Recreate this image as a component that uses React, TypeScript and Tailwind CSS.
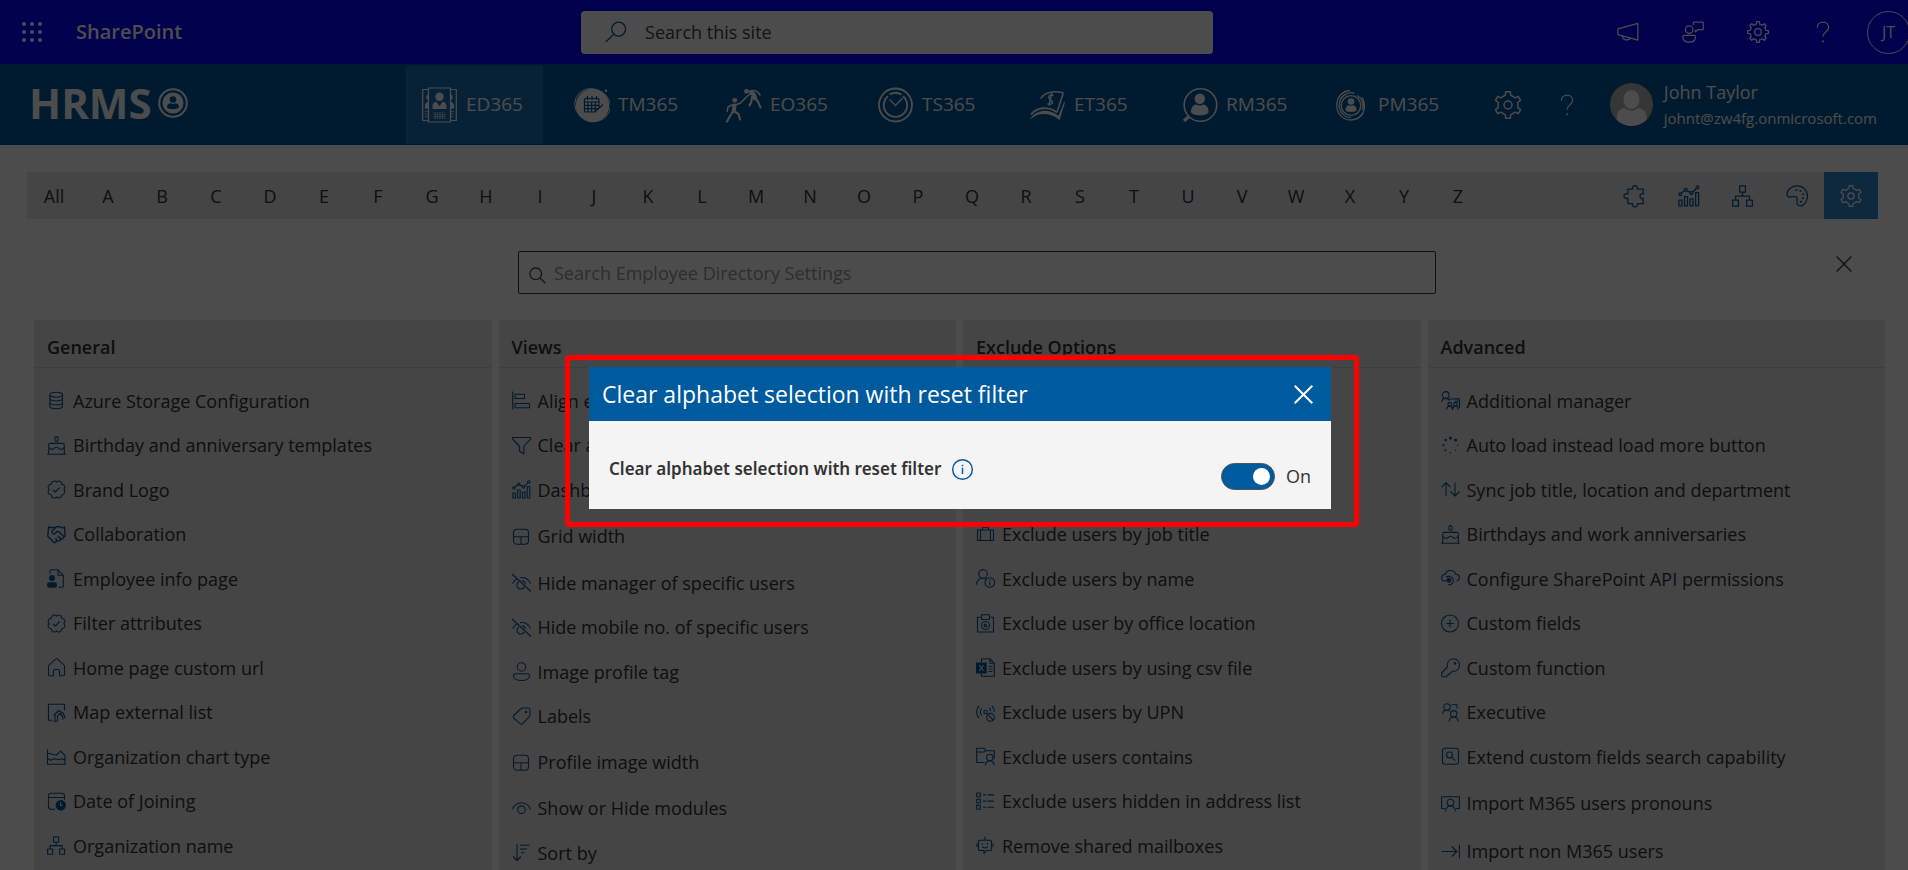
import React, { useState } from "react";
import { Handshake } from "lucide-react";

type Row = { icon: string; label: string; tall?: boolean };

function polar(cx: number, cy: number, r: number, a: number) {
  return `${(cx + r * Math.sin(a)).toFixed(2)} ${(cy - r * Math.cos(a)).toFixed(2)}`;
}

/* Closed gear outline with n teeth. */
function gearPath(c: number, n: number, outer: number, inner: number) {
  const step = (Math.PI * 2) / n;
  const pts: string[] = [];
  for (let i = 0; i < n; i++) {
    const a = i * step;
    pts.push(polar(c, c, outer, a - step * 0.17));
    pts.push(polar(c, c, outer, a + step * 0.17));
    pts.push(polar(c, c, inner, a + step * 0.25));
    pts.push(polar(c, c, inner, a + step * 0.75));
  }
  return `M${pts.join("L")}Z`;
}

/* Scalloped seal outline with n lobes. */
function sealPath(c: number, n: number, r: number) {
  const step = (Math.PI * 2) / n;
  let d = `M${polar(c, c, r, 0)}`;
  for (let i = 1; i <= n; i++) d += `A3 3 0 0 1 ${polar(c, c, r, i * step)}`;
  return d + "Z";
}

const seal = (
  <>
    <path d={sealPath(9.5, 8, 7.4)} />
    <path d="M6 9.800l2.300 2.200 4.600-4.600" />
  </>
);

const chart = (
  <>
    <path d="M.8 18v-5h2.600v5zM5.600 18v-8h2.600v8zM10.400 18v-6h2.600v6zM15.200 18V6.500h2.600V18z" />
    <path d="M2.600 7.400l3.200-2.600M7.600 4.800l3.200 1.800M12.600 6.200l3.400-3.400" />
    <circle cx="1.900" cy="8" r="1.200" />
    <circle cx="6.700" cy="4.200" r="1.200" />
    <circle cx="11.600" cy="7" r="1.200" />
    <circle cx="16.800" cy="2" r="1.200" />
  </>
);

const org = (
  <>
    <path d="M6.600.8h5v5.400h-5zM.6 13h5v5.200h-5zM12.600 13h5v5.200h-5z" />
    <path d="M9.100 6.200v3.400M3.100 13V9.600h12V13" />
  </>
);

const hiddenEye = (
  <>
    <path d="M0 1l19 17.500M.5 10.500c1-2.200 2.800-4 5-5M8 4.700c4.800-.9 9.200 1.600 10.500 5.800" />
    <path d="M7 8.700a3.900 3.900 0 1 0 5.400 5M9.800 7.800a3.900 3.900 0 0 1 3.600 3.400" />
  </>
);

const halves = (
  <>
    <rect x="1.500" y="2.200" width="15" height="15" rx="3.500" />
    <path d="M1.500 9.700h15M9 9.700v7.500" />
  </>
);

const cake = (
  <>
    <ellipse cx="9.500" cy="3" rx="1.600" ry="2.400" />
    <path d="M1.700 18V8.900c0-.9.600-1.500 1.500-1.500h12.600c.9 0 1.500.6 1.500 1.500V18M0 18.200h19" />
    <path d="M1.700 11.700c1.700 0 1.800 1.800 3.400 1.800s2.200-2.300 4.400-2.300 2.600 2.300 4.400 2.300 1.700-1.800 3.400-1.800" />
  </>
);

const glyphs: Record<string, React.ReactNode> = {
  database: (
    <>
      <ellipse cx="9.200" cy="3.800" rx="6.300" ry="2.500" />
      <path d="M2.900 3.800v11.400c0 1.300 2.800 2.500 6.300 2.500s6.300-1.200 6.300-2.500V3.800" />
      <path d="M2.900 7.600c0 1.300 2.800 2.400 6.300 2.400s6.300-1.100 6.300-2.400M2.900 11.400c0 1.300 2.800 2.400 6.300 2.400s6.300-1.100 6.300-2.400" />
    </>
  ),
  cake,
  seal,
  docPerson: (
    <>
      <path d="M3 4.500V2.200C3 1.300 3.400.8 4.200.8H11l5.300 5.500v10.600c0 .8-.5 1.300-1.300 1.300h-3.500M11 .8v5.500h5.300" />
      <circle cx="5" cy="9" r="3" fill="currentColor" stroke="none" />
      <rect x="0" y="13.200" width="10" height="5.600" rx="2.400" fill="currentColor" stroke="none" />
    </>
  ),
  home: (
    <path d="M1.500 8.300c0-.6.200-1 .7-1.400L8.500 1.200c.6-.5 1.400-.5 2 0l6.300 5.700c.5.400.7.800.7 1.400v8.200c0 .7-.5 1.200-1.200 1.200H12.500v-5c0-.7-.5-1.200-1.200-1.200H7.700c-.7 0-1.200.5-1.200 1.200v5H2.700c-.7 0-1.200-.5-1.200-1.200z" />
  ),
  mapList: (
    <>
      <path d="M5.500 17.300H1.500V1.200h16v6.300" />
      <path d="M6.500 18.300h4M8 18v-7l4-3.500 2 1.500 2 1 2.500 5.500M10.500 18v-5.300l2.200-2.200 3.300 3.300v3M6.500 12.500l4-4M14 10v3" />
    </>
  ),
  area: (
    <>
      <path d="M.5 2.200v15h18" />
      <path d="M.5 6.500h2.500l3 1 3.500.5L13.500 4.200l4.500 4.300v8.700" />
      <path d="M.5 11.300l3 2 4-1.500 4.500 1 2.500-1 3.500.8" />
    </>
  ),
  calendarClock: (
    <>
      <path d="M8 17.300H4a2.500 2.500 0 0 1-2.500-2.500V3.700A2.500 2.500 0 0 1 4 1.200h11a2.500 2.500 0 0 1 2.500 2.500v4M1.500 5.500h16" />
      <circle cx="13.800" cy="13.300" r="5.200" fill="currentColor" stroke="none" />
      <path d="M13.500 10.500v3h2.300" className="stroke-[#e6e6e6]" />
    </>
  ),
  org,
  align: <path d="M.7.500v18M3 3.300h9.500v4.200H3zM3 12.500h14.500v4.200H3z" />,
  funnel: <path d="M.7 1.500h17.800v1.700l-6.700 7.300V18l-4.200-2.700V10.500L.7 3.200z" />,
  chart,
  halves,
  hiddenEye,
  person: (
    <>
      <circle cx="9.500" cy="5" r="4.200" />
      <path d="M1.500 13.700c0-1.300.7-2 2-2h12c1.300 0 2 .7 2 2 0 3-3.500 4.800-8 4.800s-8-1.800-8-4.800z" />
    </>
  ),
  tag: (
    <>
      <path d="M10.800 1h5.400c1.100 0 1.800.7 1.800 1.800v5c0 .8-.2 1.300-.8 1.900l-6.400 7c-.9.900-1.900.9-2.800 0L1.700 11c-.8-.8-.8-1.700 0-2.500L8.500 2c.7-.7 1.300-1 2.300-1z" />
      <circle cx="14" cy="5" r=".8" fill="currentColor" />
    </>
  ),
  eye: (
    <>
      <path d="M.7 10.500C1.500 6.500 5.200 3.800 9.500 3.800s8 2.700 8.800 6.700" />
      <circle cx="9.500" cy="10.700" r="3.800" />
    </>
  ),
  sort: <path d="M5 1v16.500M1 13.500l4 4 4-4M8 2.200h9.500M8 6h7M9 9.800h3.500" />,
  briefcase: (
    <>
      <rect x="1.500" y="5" width="16" height="10.500" />
      <path d="M6.500 5V3.500c0-.8.400-1.200 1.200-1.200h3.600c.8 0 1.200.4 1.200 1.200V5M4.500 5v10.500M14.500 5v10.500" />
    </>
  ),
  personInfo: (
    <>
      <circle cx="7" cy="5" r="4.300" />
      <path d="M.5 15.700C.8 11.700 3.500 9.300 7 9.300c1 0 1.800.2 2.500.6" />
      <circle cx="13.800" cy="13.500" r="4.800" />
      <path d="M13.800 12.800v3.400M13.800 10.800v1" />
    </>
  ),
  office: (
    <>
      <path d="M4.500 3.200h-3v14.800h16V3.200h-3M5.500.8h8v4.700h-8z" />
      <circle cx="9.500" cy="11.500" r="4" />
      <path d="M9.500 10a1.500 1.500 0 1 0 1.500 1.500H9.500z" />
    </>
  ),
  excel: (
    <>
      <path d="M5.500 4.500V.8H14l4.300 4.500v12.900H5.500V15.500M14 .8v4.500h4.300M12.500 8.500h4M12.500 11h4M12.500 13.500h4" />
      <rect x="0" y="4.500" width="10.700" height="11" fill="currentColor" stroke="none" />
      <path d="M3.200 7.200l4.300 5.600M7.500 7.200l-4.300 5.600" className="stroke-[#e6e6e6]" />
    </>
  ),
  broadcast: (
    <>
      <path d="M3 3C-.2 6-.2 12 3 15M5.800 5c-1.800 2-1.800 6 0 8M13.200 5c.9.9 1.300 2 1.400 3M16 3c1.500 1.500 2.500 3.500 2.400 6" />
      <circle cx="9.500" cy="9" r="1.700" />
      <circle cx="14.500" cy="14.300" r="3.900" />
      <path d="M11.800 11.600l5.400 5.400" />
    </>
  ),
  folderPerson: (
    <>
      <path d="M8.500 15.500H.7V1.200h7L10 3.700h8.300v7.500M.7 5h7L10 3.700" />
      <circle cx="13.800" cy="10.500" r="3.200" />
      <path d="M9.300 18.500c.3-2.900 2-4.700 4.500-4.700s4.200 1.800 4.500 4.700" />
    </>
  ),
  list: (
    <>
      <path d="M.7 1h3.600v3.800H.7zM.7 7.200h3.600V11H.7zM.7 13.400h3.600v3.800H.7z" />
      <path d="M7 2.900h3M11.500 2.900H18M7 9.100h3M11.500 9.100H18M7 15.300h3M11.500 15.300H18" />
    </>
  ),
  bot: (
    <>
      <path d="M9 .5v3.700M3.500 4.200h11c.7 0 1 .3 1 1v8.300c0 .7-.3 1-1 1h-4L8 17.500v-3H3.500c-.7 0-1-.3-1-1V5.200c0-.7.300-1 1-1zM1 7.500v3.500M17 7.500v3.500" />
      <path d="M6.500 7v1.500M11.500 7v1.500M6 10.700c1.700 1.500 4.300 1.500 6 0" />
    </>
  ),
  manager: (
    <>
      <circle cx="4.700" cy="4" r="3.400" />
      <path d="M.5 11.200c.2-2.300 1.700-3.800 4.200-3.800 1.200 0 2.200.4 2.900 1.100M8 9.700V8h10.500v9M14 7.700h4.500M14 10.200h4" />
      <circle cx="8.700" cy="13.200" r="1.800" />
      <circle cx="14.500" cy="13.200" r="1.800" />
      <path d="M5.700 18.600c.2-2.300 1.200-3.500 3-3.500s2.800 1.200 2.900 3.500c.1-2.300 1.100-3.500 2.900-3.500s2.800 1.200 3 3.500" />
    </>
  ),
  dots: (
    <g fill="currentColor" stroke="none">
      <circle cx="9.500" cy="2" r="1.500" />
      <circle cx="14.600" cy="4" r="1.500" />
      <circle cx="4.600" cy="4" r="1.200" />
      <circle cx="2.400" cy="9.200" r="1.100" />
      <circle cx="16.800" cy="9.200" r=".6" />
      <circle cx="4.400" cy="14.300" r="1" />
      <circle cx="14.700" cy="14.300" r=".7" />
      <circle cx="9.500" cy="16.700" r=".8" />
    </g>
  ),
  sync: <path d="M5 16V2.700M.5 7.200L5 2.700l4.500 4.500M14 2.700V16M9.500 11.500L14 16l4.500-4.500" />,
  cloud: (
    <>
      <path d="M3.500 12.300C1.700 11.800.7 10.600.7 9c0-1.900 1.300-3.400 3.300-3.500C5 2.900 6.800 1.500 9.500 1.500S14 2.900 14.800 5.200c2.200.1 3.500 1.600 3.500 3.500 0 1.700-.9 2.800-2.600 3.300" />
      <path d="M5 8.200c2.500-1.500 5.500-.8 6.800 1.200 1 1.800.5 4.600-1.300 5.800-1 .6-2.300.8-3.500.3" />
      <circle cx="8" cy="11.300" r="1.900" fill="currentColor" />
      <path d="M3.500 11.800H7" />
    </>
  ),
  plus: (
    <>
      <circle cx="9" cy="9.500" r="8.500" />
      <path d="M9 5.800v7.400M5.300 9.500h7.400" />
    </>
  ),
  key: (
    <>
      <path d="M6.300 9C5.600 4.600 8.200.7 12.300.7c3.500 0 6.200 2.600 6.200 6.200 0 4.300-3.200 7-7.200 6.300L9.800 15.200H8v1.800H5.800v1.700H1.700c-.6 0-1-.4-1-1v-2.700z" />
      <circle cx="14" cy="5.300" r=".8" fill="currentColor" />
    </>
  ),
  executive: (
    <>
      <circle cx="6" cy="4" r="3.200" />
      <path d="M1.500 11C1.700 8.700 3.300 7.300 6 7.300c1 0 1.700.3 2.500.8M10.500 1.800h5.500v3.700" />
      <circle cx="12.700" cy="10.800" r="3.200" />
      <path d="M8.200 18.500c.2-2.900 1.800-4.500 4.500-4.500s4.300 1.600 4.500 4.500" />
    </>
  ),
  searchBox: (
    <>
      <rect x="1.500" y="1.200" width="16" height="16" rx="2.500" />
      <circle cx="8.500" cy="8" r="3" />
      <path d="M10.700 10.200l3.500 3.500" />
    </>
  ),
  board: (
    <>
      <path d="M4 14.500H.6V2.700h17.800v11.800H15" />
      <circle cx="9.500" cy="8.500" r="3.300" />
      <path d="M4.500 17.300c.3-3.400 2-5.300 5-5.300s4.700 1.900 5 5.300" />
    </>
  ),
  arrowIn: <path d="M.5 9.500h15M10.800 4.500l5 5-5 5M18.400 2.700v13.600" />,
  puzzle: (
    <path d="M4.700 3.500h2.700a2.200 2.200 0 1 1 4.200 0h5v4.200a2.100 2.100 0 1 0 0 3.900V16h-5a2.200 2.200 0 1 1-4.200 0H3.400v-4.400h-.7a2.100 2.100 0 1 1 0-4h.7V3.500z" />
  ),
  palette: (
    <>
      <path d="M4 10.300c-1.800.5-3.300-.8-3.200-2.600C1.200 3.600 5.200.8 9.800.8c5 0 8.700 3.800 8.700 8.700 0 4.700-2.800 8.500-6 8.500-2.200 0-3.300-1.500-3-3.500.3-1.700.4-2.800-.3-3.800-1-1.300-2.700-1.100-5.200-.4z" />
      <g fill="currentColor" stroke="none">
        <circle cx="9" cy="4.500" r=".9" />
        <circle cx="12.500" cy="5.200" r=".9" />
        <circle cx="14.800" cy="8" r=".9" />
        <circle cx="14.700" cy="11.500" r=".9" />
        <circle cx="12.800" cy="14.500" r=".9" />
      </g>
    </>
  ),
  gear: (
    <>
      <path d={gearPath(9.5, 6, 9.1, 6.9)} />
      <circle cx="9.500" cy="9.500" r="2.700" />
    </>
  ),
  gear8: (
    <>
      <path d={gearPath(9.5, 8, 9, 7)} />
      <circle cx="9.500" cy="9.500" r="2.900" />
    </>
  ),
  help: (
    <>
      <path d="M4.600 5.800C4.600 3 6.600 1 9.500 1s4.900 1.900 4.900 4.500c0 3.700-4.900 4-4.900 8.200" />
      <circle cx="9.500" cy="17.500" r=".8" fill="currentColor" stroke="none" />
    </>
  ),
  megaphone: (
    <>
      <path d="M1.500 6.500L18 2v14.500L1.500 12c-.5-.2-.8-.5-.8-1V7.500c0-.5.300-.8.800-1z" />
      <path d="M4.700 13c0 3.900 5.800 4.300 6.500 1.700" />
    </>
  ),
  feedback: (
    <>
      <circle cx="6.200" cy="7.500" r="3.200" />
      <path d="M.7 13.500c0-.7.400-1 1-1h9c.6 0 1 .3 1 1 0 3-2.300 4.700-5.500 4.700S.7 16.500.7 13.500z" />
      <path d="M9.800 3.500V1h8.500v6.500h-4.600l-2.200 1.800V7.500" />
    </>
  ),
  searchLeft: (
    <>
      <circle cx="11.800" cy="7" r="6" />
      <path d="M7.600 11.300L.7 18.200" />
    </>
  ),
  search: (
    <>
      <circle cx="7.500" cy="7.500" r="6.500" />
      <path d="M12.200 12.200l6 6" />
    </>
  ),
  close: <path d="M.7.7l17.600 17.600M18.300.7L.7 18.300" />,
  info: (
    <>
      <circle cx="9.500" cy="9.500" r="8.900" />
      <path d="M9.500 8v5.500M9.500 5.300v1.300" />
    </>
  ),
};

function Icon({ name, className = "size-[19px] stroke-[1.1]" }: { name: string; className?: string }) {
  if (name === "handshake") return <Handshake className="size-[21px] shrink-0" strokeWidth={1.5} aria-hidden />;
  return (
    <svg
      viewBox="0 0 19 19"
      className={`shrink-0 overflow-visible ${className}`}
      fill="none"
      stroke="currentColor"
      strokeLinejoin="round"
      aria-hidden
    >
      {glyphs[name]}
    </svg>
  );
}

const appGlyphs: Record<string, React.ReactNode> = {
  ED365: (
    <>
      <g fill="none" stroke="currentColor" strokeWidth="1.200">
        <path d="M6.500 1h22v34h-22zM6.500 2.500H.7v31h5.800M28.500 2.500h5.800v31h-5.800" />
      </g>
      <circle cx="17.500" cy="9.700" r="4.200" />
      <path d="M10.500 22v-3.500c0-2 1.500-3.500 4-3.800l3 4.500 3-4.500c2.500.3 4 1.800 4 3.800V22zM6 7.500C3.800 8 3.800 12 6 13zM6 15c-2.200.5-3 2-3 4v2.500h3zM29 7.500c2.200.5 2.200 4.500 0 5.500zM29 15c2.200.5 3 2 3 4v2.500h-3z" />
      <g fill="none" stroke="currentColor" strokeWidth="1.100" strokeDasharray="1.500 1">
        <path d="M12 26h11M12.500 27.700h11M12 29.400h11M12.500 31.100h11M3 24.500h3M3 27h3M3 29.500h3M29 24.500h3M29 27h3M29 29.500h3" />
      </g>
    </>
  ),
  TM365: (
    <>
      <circle cx="18.500" cy="18.500" r="16.700" />
      <g fill="none" stroke="currentColor" strokeWidth="1">
        <ellipse cx="16.500" cy="17" rx="15.800" ry="15.500" />
        <ellipse cx="20" cy="19" rx="16.500" ry="15.500" />
      </g>
      <circle cx="32" cy="3.800" r="1.200" />
      <g fill="none" className="stroke-[#005a9e]" strokeWidth="1.200">
        <path d="M25 21V12.500c0-.7-.4-1-1-1H11.500c-.6 0-1 .3-1 1V24c0 .7.400 1 1 1H21l8-7.500M13.500 9v4M18 9v4M22.500 9v4M10.500 15h14.500M10.500 18.300h14.500M10.500 21.600H24M14 15v10M17.600 15v10M21.200 15v10" />
      </g>
    </>
  ),
  EO365: (
    <>
      <circle cx="20.500" cy="4.300" r="2.400" />
      <circle cx="8.800" cy="13.300" r="2.400" />
      <g fill="none" stroke="currentColor" strokeLinecap="round" strokeLinejoin="round">
        <path d="M10.500 17.500l4-1.500 5.500-5.500 4-3.500" strokeWidth="1.600" />
        <path d="M23 4.500c4.500-2 8.500-.5 11 3.500" strokeWidth="1.600" />
        <path d="M25.500 5.500c2 1.500 3 3 3.500 5.500" strokeWidth="4.500" />
        <path d="M26 10c-.5 3.500 0 5-2.500 8.500M29.500 11c2 2.500 3.500 5.500 5 9.500" strokeWidth="2.200" />
        <path d="M8.500 18.500l-.8 5.500" strokeWidth="4" />
        <path d="M7 17.500l-5 2.500-.8 4.500" strokeWidth="1.500" />
        <path d="M7 24.500l-3 4.500-3 5.500M8.500 24.500l4 2.500 1.500 5.500" strokeWidth="2.200" />
      </g>
    </>
  ),
  TS365: (
    <g fill="none" stroke="currentColor">
      <circle cx="17.500" cy="18" r="16.500" strokeWidth="1.800" />
      <path d="M10 9.200a11.700 11.700 0 1 0 15 0" strokeWidth="1.800" />
      <path d="M11.500 7.500c3.800-2.200 8.200-2.200 12 0" strokeWidth="2" />
      <path d="M11.500 12.500l6 6 7-7.500" strokeWidth="1.400" />
    </g>
  ),
  ET365: (
    <>
      <path d="M0 32.500C4 24 17 19.500 28.500 28.800l5.800-14.300.7 1L29.500 33C20 25.500 9 25 0 32.500z" />
      <g fill="none" stroke="currentColor">
        <path d="M10.500 11.500C15 5.500 22 3.500 32 5.500c1 0 1.400.5 1 1.500L27 25" strokeWidth="1.500" />
        <path d="M1 27.500c6-7.500 17.500-8.500 26-2" strokeWidth="1.800" />
        <path d="M23.500 8.500c-3-1.500-5.200.3-4.600 2.500.5 1.800 3.700 2 3.500 4.300-.2 2-3.200 2.700-5 1.400M21.800 6l-3 12.500" strokeWidth="1.500" />
      </g>
    </>
  ),
  RM365: (
    <>
      <circle cx="18.500" cy="18" r="16.300" fill="none" stroke="currentColor" strokeWidth="1.600" />
      <path d="M6.500 30l-4.500 4" stroke="currentColor" strokeWidth="3.200" />
      <circle cx="17.800" cy="11.700" r="5.200" />
      <path d="M9 24.500c0-4.500 3-7 5.500-7 2 1.200 4.600 1.200 6.600 0 2.500 0 5.500 2.500 5.500 7 0 2.500-3.600 3.700-8.800 3.700S9 27 9 24.500z" />
    </>
  ),
  PM365: (
    <>
      <g fill="none" stroke="currentColor" strokeWidth="1.300">
        <circle cx="17" cy="18.500" r="9.800" />
        <path d="M16 3.500C8.500 4 2.700 10 2.700 18.300 2.700 27 9 33 17 33c5.500 0 10-2.800 12.500-7.500M20.500 6.300C13.500 4 5.200 9.500 5.200 18.300c0 7.200 5.600 12.200 11.800 12.200M17 33c8.500-1 13.500-6.500 13.500-14 0-3.500-1-6.500-2.700-8.800M28.300 23c1.800-5.500 0-11.500-5-14.500" />
      </g>
      <circle cx="17" cy="14.500" r="3.300" />
      <path d="M11.500 22.800c0-2.900 1.900-4.500 3.500-4.500 1.200.7 2.800.7 4 0 1.600 0 3.500 1.600 3.500 4.500 0 1.500-2.200 2.200-5.500 2.200s-5.500-.7-5.500-2.200z" />
    </>
  ),
};

const apps = ["ED365", "TM365", "EO365", "TS365", "ET365", "RM365", "PM365"];
const letters = ["All", ..."ABCDEFGHIJKLMNOPQRSTUVWXYZ".split("")];
const tools = [
  { icon: "puzzle", label: "Integrations" },
  { icon: "chart", label: "Dashboard" },
  { icon: "org", label: "Organization chart" },
  { icon: "palette", label: "Appearance" },
  { icon: "gear", label: "Settings" },
];

const columns: { title: string; rows: Row[] }[] = [
  {
    title: "General",
    rows: [
      { icon: "database", label: "Azure Storage Configuration" },
      { icon: "cake", label: "Birthday and anniversary templates" },
      { icon: "seal", label: "Brand Logo" },
      { icon: "handshake", label: "Collaboration" },
      { icon: "docPerson", label: "Employee info page" },
      { icon: "seal", label: "Filter attributes" },
      { icon: "home", label: "Home page custom url" },
      { icon: "mapList", label: "Map external list" },
      { icon: "area", label: "Organization chart type" },
      { icon: "calendarClock", label: "Date of Joining" },
      { icon: "org", label: "Organization name" },
    ],
  },
  {
    title: "Views",
    rows: [
      { icon: "align", label: "Align employee" },
      { icon: "funnel", label: "Clear alphabet" },
      { icon: "chart", label: "Dashboard" },
      { icon: "halves", label: "Grid width", tall: true },
      { icon: "hiddenEye", label: "Hide manager of specific users" },
      { icon: "hiddenEye", label: "Hide mobile no. of specific users" },
      { icon: "person", label: "Image profile tag" },
      { icon: "tag", label: "Labels" },
      { icon: "halves", label: "Profile image width", tall: true },
      { icon: "eye", label: "Show or Hide modules" },
      { icon: "sort", label: "Sort by" },
    ],
  },
  {
    title: "Exclude Options",
    rows: [
      { icon: "office", label: "Exclude departments" },
      { icon: "list", label: "Exclude domains" },
      { icon: "person", label: "Exclude guests" },
      { icon: "briefcase", label: "Exclude users by job title" },
      { icon: "personInfo", label: "Exclude users by name" },
      { icon: "office", label: "Exclude user by office location" },
      { icon: "excel", label: "Exclude users by using csv file" },
      { icon: "broadcast", label: "Exclude users by UPN" },
      { icon: "folderPerson", label: "Exclude users contains" },
      { icon: "list", label: "Exclude users hidden in address list" },
      { icon: "bot", label: "Remove shared mailboxes" },
    ],
  },
  {
    title: "Advanced",
    rows: [
      { icon: "manager", label: "Additional manager" },
      { icon: "dots", label: "Auto load instead load more button" },
      { icon: "sync", label: "Sync job title, location and department" },
      { icon: "cake", label: "Birthdays and work anniversaries" },
      { icon: "cloud", label: "Configure SharePoint API permissions" },
      { icon: "plus", label: "Custom fields" },
      { icon: "key", label: "Custom function" },
      { icon: "executive", label: "Executive" },
      { icon: "searchBox", label: "Extend custom fields search capability" },
      { icon: "board", label: "Import M365 users pronouns", tall: true },
      { icon: "arrowIn", label: "Import non M365 users", tall: true },
    ],
  },
];

function SuiteBar() {
  return (
    <header className="flex h-16 items-center bg-[#0000ff] pl-5 text-white">
      <button type="button" aria-label="App launcher" className="grid size-6 grid-cols-3 place-items-center">
        {Array.from({ length: 9 }, (_, i) => (
          <span key={i} className="size-1 rounded-full bg-white" />
        ))}
      </button>
      <a href="#sharepoint" className="ml-8 text-xl font-semibold">
        SharePoint
      </a>
      <div className="flex flex-1 justify-center pl-[17px]">
        <label className="flex h-[43px] w-[632px] items-center gap-[18px] rounded bg-white px-6 text-[#005a9e]">
          <Icon name="searchLeft" className="size-[22px] stroke-[1.1]" />
          <input
            type="search"
            aria-label="Search this site"
            placeholder="Search this site"
            className="flex-1 bg-transparent text-lg outline-none placeholder:text-[#444]"
          />
        </label>
      </div>
      <div className="-mr-0.5 flex items-center">
        {[
          ["megaphone", "Announcements"],
          ["feedback", "Feedback"],
          ["gear8", "Settings"],
          ["help", "Help"],
        ].map(([icon, label]) => (
          <button key={icon} type="button" aria-label={label} className="flex w-[65px] justify-center">
            <Icon name={icon} className="size-[22px] stroke-[1.1]" />
          </button>
        ))}
        <button
          type="button"
          className="ml-3 flex size-[43px] items-center justify-center rounded-full border border-white text-base"
        >
          JT
        </button>
      </div>
    </header>
  );
}

function AppNav() {
  return (
    <nav className="flex h-[81px] items-center bg-[#005a9e] text-white">
      <a href="#home" className="flex w-[406px] shrink-0 items-center gap-1.5 pb-1 pl-[29px] text-[42px] font-bold">
        HRMS
        <svg viewBox="0 0 30 30" className="size-[30px]" fill="currentColor" aria-hidden>
          <circle cx="15" cy="15" r="13.800" fill="none" stroke="currentColor" strokeWidth="2" />
          <circle cx="15" cy="15" r="10.500" />
          <circle cx="15" cy="11.500" r="3.300" className="fill-[#005a9e]" />
          <path d="M9 19c0-2.500 2-3.700 3.500-3.700 1.500.9 3.500.9 5 0 1.500 0 3.500 1.200 3.500 3.700 0 1.300-2.500 2.200-6 2.200S9 20.300 9 19z" className="fill-[#005a9e]" />
        </svg>
      </a>
      <ul className="flex flex-1 gap-[15px]">
        {apps.map((app, i) => (
          <li key={app}>
            <a
              href={`#${app}`}
              className={`flex h-[78px] w-[137px] items-center gap-2 pl-4 text-[19px] ${i === 0 ? "bg-[#2f8ad0]/50" : ""}`}
            >
              <svg viewBox="0 0 36 36" className="size-9 shrink-0" fill="currentColor" aria-hidden>
                {appGlyphs[app]}
              </svg>
              {app}
            </a>
          </li>
        ))}
      </ul>
      <button type="button" aria-label="Settings" className="mr-[34px]">
        <Icon name="gear" className="size-7 stroke-1" />
      </button>
      <button type="button" aria-label="Help" className="mr-8">
        <Icon name="help" className="size-[22px] stroke-1" />
      </button>
      <div className="flex items-center gap-[11px] pr-[31px]">
        <svg viewBox="0 0 43 43" className="size-[43px] rounded-full bg-[#b5b5b5] fill-white" aria-hidden>
          <ellipse cx="21.500" cy="16.500" rx="8" ry="9.500" />
          <path d="M7 43V34c0-6 4-9 8-9 4 3.500 9 3.500 13 0 4 0 8.500 3 8.500 9v9z" />
        </svg>
        <div>
          <p className="text-lg leading-[26px]">John Taylor</p>
          <p className="text-[15px] leading-[26px]">johnt@zw4fg.onmicrosoft.com</p>
        </div>
      </div>
    </nav>
  );
}

function LetterBar() {
  return (
    <div className="flex h-[47px] justify-between bg-[#e6e6e6]">
      <div className="flex">
        {letters.map((letter) => (
          <button key={letter} type="button" className="w-[54px] text-lg">
            {letter}
          </button>
        ))}
      </div>
      <div className="flex text-[#005a9e]">
        {tools.map(({ icon, label }) => (
          <button
            key={icon}
            type="button"
            aria-label={label}
            className={`flex w-[54px] items-center justify-center ${icon === "gear" ? "bg-[#2f8ad0] text-white" : ""}`}
          >
            <Icon name={icon} className="size-[22px] stroke-[1.1]" />
          </button>
        ))}
      </div>
    </div>
  );
}

function SettingsColumn({ title, rows }: { title: string; rows: Row[] }) {
  return (
    <section className="bg-[#e6e6e6]">
      <h2 className="h-12 border-b border-[#cfcfcf] px-[13px] pt-[13px] text-lg leading-7 font-semibold">{title}</h2>
      <ul className="px-[13px] pt-2.5">
        {rows.map((row) => (
          <li key={row.label} className={row.tall ? "h-12" : "odd:h-[45px] even:h-11"}>
            <a href="#setting" className="flex h-full items-center gap-[7px] text-lg whitespace-nowrap">
              <span className="flex w-[19px] justify-center text-[#005a9e]">
                <Icon name={row.icon} />
              </span>
              {row.label}
            </a>
          </li>
        ))}
        <li className="h-4" aria-hidden />
      </ul>
    </section>
  );
}

function ResetFilterDialog() {
  const [on, setOn] = useState(true);
  return (
    <div className="fixed inset-0 flex items-center justify-center bg-black/70 pt-3 pl-4">
      <div className="rounded-sm border-[5px] border-[#ff0000] pt-[7px] pr-[23px] pb-[13px] pl-[19px]">
        <div role="dialog" aria-modal="true" aria-labelledby="dialog-title" className="w-[742px] bg-[#f4f4f4]">
          <div className="flex h-[54px] items-center justify-between bg-[#005a9e] pr-[18px] pl-[13px] text-white">
            <h1 id="dialog-title" className="text-[23px]">
              Clear alphabet selection with reset filter
            </h1>
            <button type="button" aria-label="Close dialog">
              <Icon name="close" className="size-[19px] stroke-2" />
            </button>
          </div>
          <div className="flex h-[88px] items-start justify-between px-5 pt-[34px] text-[#333]">
            <div className="flex items-center gap-[11px] text-lg leading-7 font-semibold">
              <label htmlFor="reset-switch" className="font-['Segoe_UI','Noto_Sans',sans-serif] text-[17px]">
                Clear alphabet selection with reset filter
              </label>
              <span className="text-[#005a9e]">
                <Icon name="info" className="size-[21px] stroke-[1.3]" />
              </span>
            </div>
            <div className="flex items-center gap-[11px] pt-[7px] text-lg leading-7">
              <input
                id="reset-switch"
                type="checkbox"
                role="switch"
                checked={on}
                onChange={(e) => setOn(e.target.checked)}
                className="flex h-[27px] w-[54px] appearance-none items-center rounded-full border border-[#555] bg-white px-1 before:size-[17px] before:rounded-full before:bg-[#555] checked:justify-end checked:bg-[#005a9e] checked:before:bg-white"
              />
              <span>{on ? "On" : "Off"}</span>
            </div>
          </div>
        </div>
      </div>
    </div>
  );
}

export default function App() {
  return (
    <div className="h-screen overflow-hidden bg-white font-['Segoe_UI','Open_Sans','Noto_Sans',sans-serif] text-[#333]">
      <SuiteBar />
      <AppNav />
      <main className="pt-[27px] pr-[30px] pl-[27px]">
        <LetterBar />
        <div className="flex items-start pt-8">
          <div className="flex flex-1 justify-center pl-[91px]">
            <label className="flex h-[43px] w-[918px] items-center gap-2 rounded-xs border border-[#333] px-2.5">
              <Icon name="search" className="mt-1.5 size-[17px] stroke-[1.3]" />
              <input
                type="search"
                aria-label="Search Employee Directory Settings"
                placeholder="Search Employee Directory Settings"
                className="flex-1 bg-transparent text-lg outline-none placeholder:text-[#999]"
              />
            </label>
          </div>
          <button type="button" aria-label="Close settings" className="mt-[5px] mr-[26px]">
            <Icon name="close" className="size-4 stroke-[1.6]" />
          </button>
        </div>
        <div className="-mr-[7px] grid grid-cols-4 gap-[7px] pt-[26px] pl-[7px]">
          {columns.map((column) => (
            <SettingsColumn key={column.title} {...column} />
          ))}
        </div>
      </main>
      <ResetFilterDialog />
    </div>
  );
}
